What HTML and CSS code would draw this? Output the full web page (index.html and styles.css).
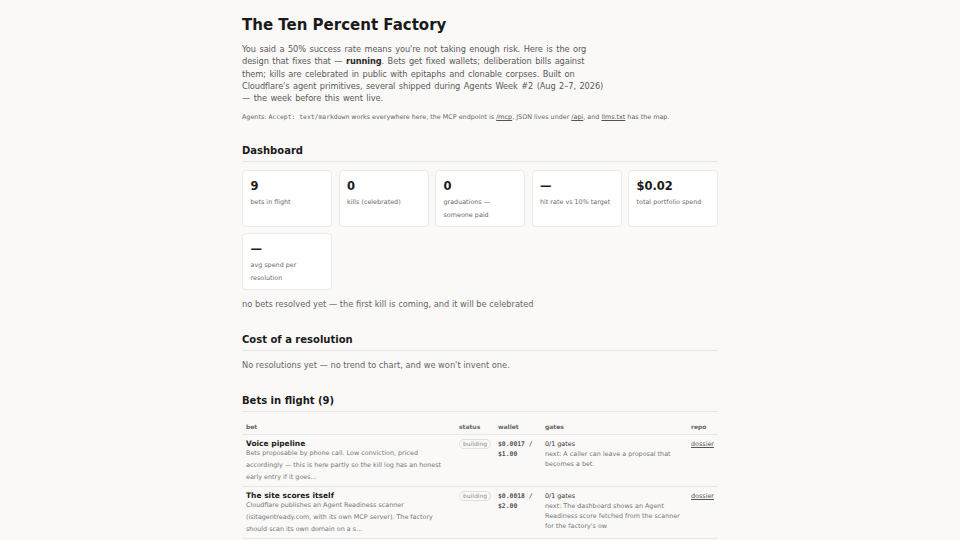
FILE: index.html
```html
<!DOCTYPE html>
<html lang="en">
<head>
<meta charset="utf-8">
<title>The Ten Percent Factory</title>
<link rel="stylesheet" href="styles.css">
</head>
<body>
<main class="page">
  <h1 class="title">The Ten Percent Factory</h1>
  <p class="lede">You said a 50% success rate means you're not taking enough risk. Here is the org design that fixes that — <strong>running</strong>. Bets get fixed wallets; deliberation bills against them; kills are celebrated in public with epitaphs and clonable corpses. Built on Cloudflare's agent primitives, several shipped during Agents Week #2 (Aug 2–7, 2026) — the week before this went live.</p>
  <p class="agents">Agents: <code>Accept: text/markdown</code> works everywhere here, the MCP endpoint is <a href="#">/mcp</a>, JSON lives under <a href="#">/api</a>, and <a href="#">llms.txt</a> has the map.</p>

  <section class="section section-first">
    <h2 class="section-title">Dashboard</h2>
    <div class="cards">
      <div class="card"><div class="card-value">9</div><div class="card-label">bets in flight</div></div>
      <div class="card"><div class="card-value">0</div><div class="card-label">kills (celebrated)</div></div>
      <div class="card"><div class="card-value">0</div><div class="card-label">graduations — someone paid</div></div>
      <div class="card"><div class="card-value">—</div><div class="card-label">hit rate vs 10% target</div></div>
      <div class="card"><div class="card-value">$0.02</div><div class="card-label">total portfolio spend</div></div>
      <div class="card"><div class="card-value">—</div><div class="card-label">avg spend per resolution</div></div>
    </div>
    <p class="note">no bets resolved yet — the first kill is coming, and it will be celebrated</p>
  </section>

  <section class="section">
    <h2 class="section-title">Cost of a resolution</h2>
    <p class="note">No resolutions yet — no trend to chart, and we won't invent one.</p>
  </section>

  <section class="section">
    <h2 class="section-title">Bets in flight (9)</h2>
    <table class="bets">
      <colgroup>
        <col class="c-bet"><col class="c-status"><col class="c-wallet"><col class="c-gates"><col class="c-repo">
      </colgroup>
      <thead>
        <tr><th>bet</th><th>status</th><th>wallet</th><th>gates</th><th>repo</th></tr>
      </thead>
      <tbody>
        <tr>
          <td><div class="bet-name">Voice pipeline</div><div class="bet-desc">Bets proposable by phone call. Low conviction, priced accordingly — this is here partly so the kill log has an honest early entry if it goes...</div></td>
          <td><span class="badge">building</span></td>
          <td class="wallet">$0.0017 / $1.00</td>
          <td><div class="gate-count">0/1 gates</div><div class="gate-next">next: A caller can leave a proposal that becomes a bet.</div></td>
          <td><a href="#">dossier</a></td>
        </tr>
        <tr>
          <td><div class="bet-name">The site scores itself</div><div class="bet-desc">Cloudflare publishes an Agent Readiness scanner (isitagentready.com, with its own MCP server). The factory should scan its own domain on a s...</div></td>
          <td><span class="badge">building</span></td>
          <td class="wallet">$0.0018 / $2.00</td>
          <td><div class="gate-count">0/1 gates</div><div class="gate-next">next: The dashboard shows an Agent Readiness score fetched from the scanner for the factory's ow</div></td>
          <td><a href="#">dossier</a></td>
        </tr>
      </tbody>
    </table>
  </section>
</main>
</body>
</html>
```
FILE: styles.css
```css
html, body {
  margin: 0;
  padding: 0;
}
body {
  background: #faf9f7;
  color: #1c1c1c;
  font-family: "DejaVu Sans", "Noto Sans", sans-serif;
  font-size: 8.25px;
  line-height: 12.25px;
}
.page {
  width: 476px;
  margin: 0 auto;
  padding: 16px 0 40px;
}
.title {
  font-size: 15px;
  line-height: 18px;
  font-weight: bold;
  margin: 0 0 9px;
  color: #1a1a1a;
}
.lede {
  margin: 0;
  max-width: 362.5px;
  word-spacing: 1px;
  letter-spacing: -0.1px;
  color: #5a5a5a;
}
.lede strong {
  color: #2a2a2a;
}
.agents {
  margin: 9px 0 0;
  font-size: 6.4px;
  line-height: 9.6px;
  color: #666;
}
.agents code {
  font-family: "DejaVu Sans Mono", monospace;
  font-size: 6.4px;
}
a {
  color: #555;
  text-decoration: underline;
}
.section {
  margin-top: 23.5px;
}
.section-first {
  margin-top: 22px;
}
.section-title {
  font-size: 10px;
  line-height: 12px;
  font-weight: bold;
  margin: 0 0 8.5px;
  padding-bottom: 4px;
  border-bottom: 1px solid #e9e7e3;
  color: #1a1a1a;
}
.cards {
  display: grid;
  grid-template-columns: repeat(5, 1fr);
  gap: 6.5px;
}
.card {
  background: #fff;
  border: 1px solid #ecebe7;
  border-radius: 4px;
  padding: 7.5px 7.5px 4.5px;
}
.card-value {
  font-size: 11.5px;
  line-height: 14px;
  font-weight: bold;
  margin-bottom: 3.5px;
  color: #1a1a1a;
}
.card-label {
  font-size: 6.4px;
  line-height: 12.5px;
  color: #6a6a6a;
}
.note {
  margin: 8px 0 0;
  color: #666;
}
.bets {
  width: 100%;
  border-collapse: collapse;
  table-layout: fixed;
}
.c-bet { width: 213px; }
.c-status { width: 39px; }
.c-wallet { width: 47px; }
.c-gates { width: 146px; }
.c-repo { width: 31px; }
.bets th {
  text-align: left;
  font-size: 6px;
  line-height: 9px;
  font-weight: bold;
  color: #666;
  padding: 1.5px 4px 3px;
  border-bottom: 1px solid #e9e7e3;
}
.bets td {
  vertical-align: top;
  padding: 4px 4px 3px;
  border-bottom: 1px solid #e9e7e3;
  font-size: 6.4px;
  line-height: 10px;
}
.bet-name {
  font-size: 7.5px;
  line-height: 9px;
  font-weight: bold;
  color: #1a1a1a;
}
.bet-desc {
  color: #777;
  line-height: 12px;
  margin-top: -1px;
}
.badge {
  display: inline-block;
  font-size: 6px;
  line-height: 8px;
  padding: 0 3px;
  border: 1px solid #e2e0dc;
  border-radius: 6px;
  background: #fbfaf8;
  color: #888;
}
.wallet {
  font-family: "DejaVu Sans Mono", monospace;
  font-weight: bold;
  color: #555;
}
.gate-count {
  color: #333;
}
.gate-next {
  color: #777;
}
.bets td a {
  font-size: 6.4px;
}
```
